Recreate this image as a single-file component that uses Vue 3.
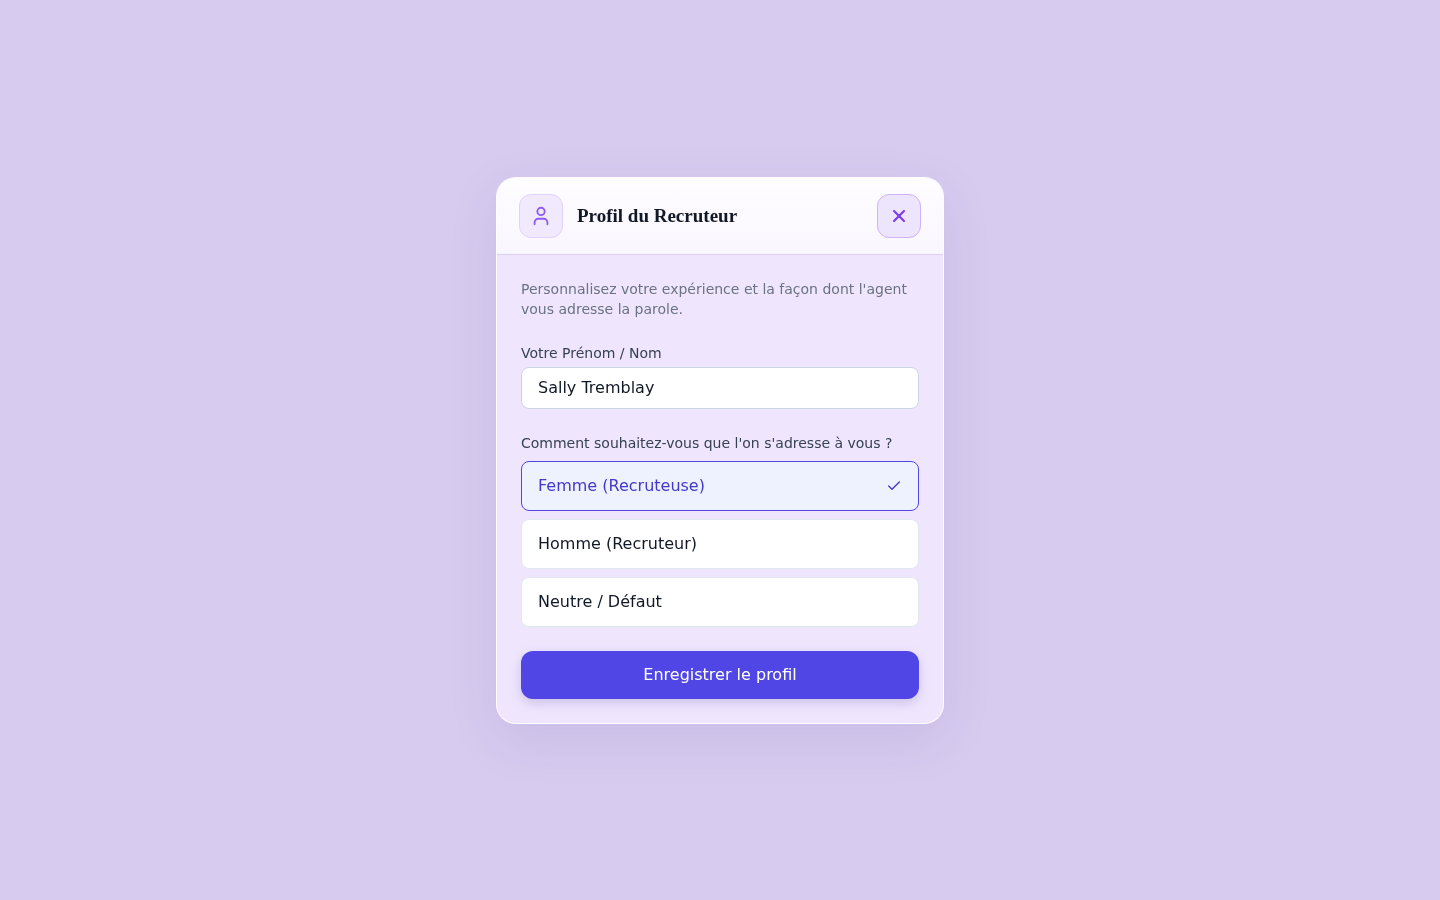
<script setup>
const options = [
  { label: 'Femme (Recruteuse)', selected: true },
  { label: 'Homme (Recruteur)', selected: false },
  { label: 'Neutre / Défaut', selected: false },
]
</script>

<template>
  <div class="page">
    <section class="card">
      <header class="head">
        <div class="head-left">
          <div class="badge">
            <svg width="22" height="22" viewBox="0 0 24 24" fill="none" stroke="currentColor" stroke-width="2" stroke-linecap="round" stroke-linejoin="round">
              <path d="M19 21v-2a4 4 0 0 0-4-4H9a4 4 0 0 0-4 4v2" />
              <circle cx="12" cy="7" r="4" />
            </svg>
          </div>
          <h2 class="title">Profil du Recruteur</h2>
        </div>
        <button class="close" type="button" aria-label="Fermer">
          <svg width="20" height="20" viewBox="0 0 24 24" fill="none" stroke="currentColor" stroke-width="2.5" stroke-linecap="round" stroke-linejoin="round">
            <path d="M18 6 6 18" />
            <path d="m6 6 12 12" />
          </svg>
        </button>
      </header>
      <div class="body">
        <p class="intro">Personnalisez votre expérience et la façon dont l'agent vous adresse la parole.</p>
        <div class="field">
          <label class="label">Votre Prénom / Nom</label>
          <input class="input" type="text" value="Sally Tremblay" />
        </div>
        <div class="field choices-field">
          <label class="label">Comment souhaitez-vous que l'on s'adresse à vous ?</label>
          <div class="choices">
            <button v-for="o in options" :key="o.label" type="button" class="choice" :class="{ selected: o.selected }">
              <span>{{ o.label }}</span>
              <svg v-if="o.selected" width="16" height="16" viewBox="0 0 24 24" fill="none" stroke="currentColor" stroke-width="2" stroke-linecap="round" stroke-linejoin="round">
                <path d="M20 6 9 17l-5-5" />
              </svg>
            </button>
          </div>
        </div>
        <button class="save" type="button">Enregistrer le profil</button>
      </div>
    </section>
  </div>
</template>

<style>
html, body { margin: 0; background: #d7cbef; }
</style>

<style scoped>
* { box-sizing: border-box; }
.page {
  width: 100%;
  min-height: 900px;
  display: flex;
  align-items: center;
  justify-content: center;
  background: #d7cbef;
  font-family: "DejaVu Sans", sans-serif;
}
.card {
  width: 448px;
  border: 1px solid rgba(255, 255, 255, 0.9);
  border-radius: 20px;
  background: rgba(242, 233, 255, 0.9);
  box-shadow: 0 16px 50px rgba(90, 60, 160, 0.1);
  backdrop-filter: blur(12px);
  overflow: hidden;
}
.head {
  display: flex;
  align-items: center;
  justify-content: space-between;
  padding: 16px 22px;
  background: linear-gradient(180deg, #fefdff 0%, #faf6ff 100%);
  border-bottom: 1px solid #dccff3;
}
.head-left { display: flex; align-items: center; gap: 14px; }
.badge {
  width: 44px;
  height: 44px;
  display: flex;
  align-items: center;
  justify-content: center;
  border-radius: 12px;
  border: 1px solid #e0d2fc;
  background: #f1e9fe;
  color: #8b5cf6;
}
.title {
  margin: 0;
  font-family: "Liberation Serif", serif;
  font-size: 19px;
  font-weight: 700;
  color: #111827;
}
.close {
  width: 44px;
  height: 44px;
  padding: 0;
  display: flex;
  align-items: center;
  justify-content: center;
  border-radius: 12px;
  border: 1px solid #cdb4f9;
  background: #ede4fd;
  color: #7c3aed;
}
.body { padding: 24px; }
.intro {
  margin: 0 0 24px;
  font-size: 14px;
  line-height: 20px;
  color: #6b7280;
}
.field { display: flex; flex-direction: column; }
.label {
  font-size: 14px;
  line-height: 20px;
  color: #374151;
  margin-bottom: 4px;
}
.input {
  height: 42px;
  width: 100%;
  padding: 0 16px;
  border: 1px solid #cbd5e1;
  border-radius: 8px;
  background: #fff;
  font-family: inherit;
  font-size: 16px;
  color: #111827;
  outline: none;
}
.choices-field { margin-top: 24px; }
.choices-field .label { margin-bottom: 8px; }
.choices { display: flex; flex-direction: column; gap: 8px; }
.choice {
  height: 50px;
  width: 100%;
  padding: 0 16px;
  display: flex;
  align-items: center;
  justify-content: space-between;
  border: 1px solid #e2e8f0;
  border-radius: 8px;
  background: #fff;
  font-family: inherit;
  font-size: 16px;
  color: #111827;
  text-align: left;
}
.choice.selected {
  border-color: #4f46e5;
  background: #eef2ff;
  color: #4338ca;
}
.save {
  display: block;
  width: 100%;
  height: 48px;
  margin-top: 24px;
  border: none;
  border-radius: 12px;
  background: #4f46e5;
  color: #fff;
  font-family: inherit;
  font-size: 16px;
  box-shadow: 0 4px 12px rgba(60, 50, 140, 0.2);
}
</style>
